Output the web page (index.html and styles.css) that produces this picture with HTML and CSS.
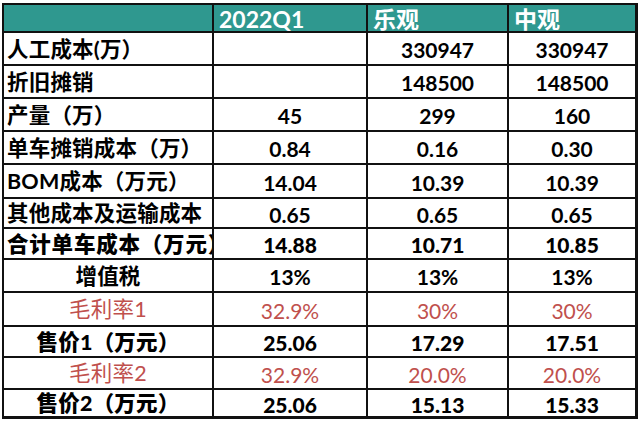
FILE: index.html
```html
<!DOCTYPE html>
<html lang="zh">
<head>
<meta charset="utf-8">
<link rel="stylesheet" href="styles.css">
</head>
<body>
<div class="sheet">
  <div class="c h"></div>
  <div class="c h">2022Q1</div>
  <div class="c h">乐观</div>
  <div class="c h last">中观</div>

  <div class="c lbl">人工成本(万）</div>
  <div class="c num"></div>
  <div class="c num">330947</div>
  <div class="c num last">330947</div>

  <div class="c lbl">折旧摊销</div>
  <div class="c num"></div>
  <div class="c num">148500</div>
  <div class="c num last">148500</div>

  <div class="c lbl">产量（万）</div>
  <div class="c num">45</div>
  <div class="c num">299</div>
  <div class="c num last">160</div>

  <div class="c lbl">单车摊销成本（万）</div>
  <div class="c num">0.84</div>
  <div class="c num">0.16</div>
  <div class="c num last">0.30</div>

  <div class="c lbl">BOM成本（万元）</div>
  <div class="c num">14.04</div>
  <div class="c num">10.39</div>
  <div class="c num last">10.39</div>

  <div class="c lbl">其他成本及运输成本</div>
  <div class="c num">0.65</div>
  <div class="c num">0.65</div>
  <div class="c num last">0.65</div>

  <div class="c lbl heavy wide">合计单车成本（万元）</div>
  <div class="c num heavy">14.88</div>
  <div class="c num heavy">10.71</div>
  <div class="c num heavy last">10.85</div>

  <div class="c lbl ctr">增值税</div>
  <div class="c num">13%</div>
  <div class="c num">13%</div>
  <div class="c num last">13%</div>

  <div class="c lbl ctr red">毛利率1</div>
  <div class="c num red">32.9%</div>
  <div class="c num red">30%</div>
  <div class="c num red last">30%</div>

  <div class="c lbl ctr heavy">售价1（万元）</div>
  <div class="c num heavy">25.06</div>
  <div class="c num heavy">17.29</div>
  <div class="c num heavy last">17.51</div>

  <div class="c lbl ctr red">毛利率2</div>
  <div class="c num red">32.9%</div>
  <div class="c num red">20.0%</div>
  <div class="c num red last">20.0%</div>

  <div class="c lbl ctr heavy bot">售价2（万元）</div>
  <div class="c num heavy bot">25.06</div>
  <div class="c num heavy bot">15.13</div>
  <div class="c num heavy bot last">15.33</div>
</div>
</body>
</html>
```
FILE: styles.css
```css
html, body {
  margin: 0;
  padding: 0;
  background: #ffffff;
}
body {
  padding: 3px 0 0 2px;
  font-family: "Lato", "Noto Sans CJK SC", sans-serif;
  color: #000;
}
.sheet {
  display: grid;
  grid-template-columns: 210px 154px 141px 129px;
  grid-template-rows: 28px 33px 33px 33px 33px 34px 30px 31px 33px 34px 31px 32px 29px;
  border-left: 2px solid #111;
  border-top: 2px solid #111;
  width: max-content;
}
.c {
  box-sizing: border-box;
  border-right: 2px solid #111;
  border-bottom: 2px solid #111;
  display: flex;
  align-items: center;
  overflow: hidden;
  white-space: nowrap;
  font-size: 21px;
  font-weight: 700;
  line-height: 1;
}
.c.last { border-right-width: 3px; }
.c.bot { border-bottom-width: 3px; }
.h {
  background: #2f988f;
  color: #ffffff;
  font-size: 23px;
  font-weight: 700;
  padding: 3px 0 0 5px;
  font-family: "Lato", "Noto Sans CJK SC", sans-serif;
}
.lbl {
  padding: 2px 0 0 3px;
  font-family: "Lato", "Noto Sans CJK SC", sans-serif;
  font-size: 21.5px;
  letter-spacing: 0.2px;
}
.lbl.wide { letter-spacing: 0.8px; }
.lbl.ctr { justify-content: center; padding-left: 0; }
.num {
  justify-content: center;
  padding-top: 2px;
}
.heavy { font-weight: 900; }
.red {
  color: #c0504d;
  font-weight: 400;
}
```
